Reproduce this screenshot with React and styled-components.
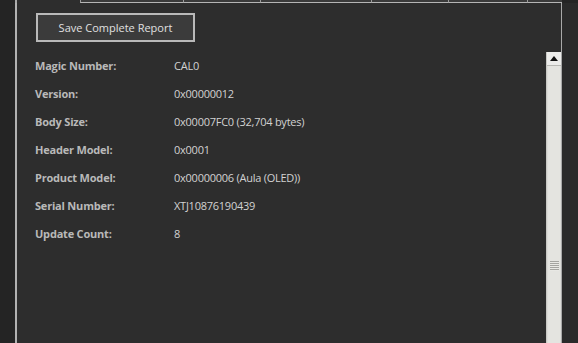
import React from 'react';
import styled, { createGlobalStyle } from 'styled-components';

const Global = createGlobalStyle`
    html, body {
        margin: 0;
        padding: 0;
        background: #242424;
    }
`

const Window = styled.div`
    width: 578px;
    height: 343px;
    display: flex;
    flex-direction: column;
    overflow: hidden;
    background: #242424;
    font-family: "Open Sans", "Noto Sans", "Liberation Sans", sans-serif;
`

const TabStrip = styled.div`
    display: flex;
    height: 3px;
    flex-shrink: 0;
`

const Gutter = styled.div`
    width: ${p => p.w}px;
    flex-shrink: 0;
    background: ${p => p.bg || '#242424'};
`

const Tab = styled.div`
    width: ${p => p.w}px;
    flex-shrink: 0;
    box-sizing: border-box;
    background: ${p => (p.active ? '#2d2d2d' : '#3a3a3a')};
    border-left: ${p => (p.active ? '2px solid #a9a9a9' : '1px solid #9a9a9a')};
    border-bottom: ${p => (p.active ? 'none' : '1px solid #b5b5b5')};
`

const Body = styled.div`
    flex: 1;
    display: flex;
    min-height: 0;
`

const Panel = styled.div`
    width: 547px;
    flex-shrink: 0;
    box-sizing: border-box;
    display: flex;
    background: #2d2d2d;
    border-left: 2px solid #b2b2b2;
    border-right: 1px solid #a8a8a8;
`

const Content = styled.div`
    flex: 1;
    padding: 10px 0 0 19px;
`

const SaveButton = styled.button`
    width: 159px;
    height: 29px;
    box-sizing: border-box;
    background: #3b3b3b;
    border: 2px solid #b9b9b9;
    color: #e0e0e0;
    font-family: inherit;
    font-size: 11px;
    padding: 0;
    cursor: pointer;
`

const Fields = styled.div`
    display: grid;
    grid-template-columns: 139px 1fr;
    grid-auto-rows: 28px;
    margin-top: 9px;
    margin-left: -1px;
    align-items: center;
    font-size: 11px;
`

const Label = styled.div`
    color: #b9b9b9;
    font-weight: 700;
    letter-spacing: -0.2px;
`

const Value = styled.div`
    color: #d2d2d2;
    letter-spacing: -0.25px;
`

const Scrollbar = styled.div`
    width: 14px;
    margin-top: 49px;
    display: flex;
    flex-direction: column;
    background: #dcdcd8;
    border-left: 1px solid #c8c8c4;
`

const ArrowButton = styled.div`
    height: 13px;
    display: flex;
    align-items: center;
    justify-content: center;
    background: #ececea;
    border-bottom: 1px solid #b8b8b4;
`

const Thumb = styled.div`
    flex: 1;
    margin: 0 1px;
    background: #e4e4e0;
    display: flex;
    align-items: center;
    justify-content: center;
    padding-top: 122px;
`

const Grip = styled.div`
    width: 9px;
    height: 10px;
    background: repeating-linear-gradient(
        to bottom,
        #a4a4a0 0 1px,
        #e8e8e4 1px 2px
    );
`

const fields = [
    ['Magic Number:', 'CAL0'],
    ['Version:', '0x00000012'],
    ['Body Size:', '0x00007FC0 (32,704 bytes)'],
    ['Header Model:', '0x0001'],
    ['Product Model:', '0x00000006 (Aula (OLED))'],
    ['Serial Number:', 'XTJ10876190439'],
    ['Update Count:', '8'],
]

export default function App()
{
    return (
        <Window>
            <Global />
            <TabStrip>
                <Gutter w={15} />
                <Tab w={65} active />
                <Tab w={103} />
                <Tab w={77} />
                <Tab w={111} />
                <Tab w={77} />
                <Tab w={79} />
                <Tab w={35} />
                <Gutter w={16} />
            </TabStrip>
            <Body>
                <Gutter w={15} />
                <Panel>
                    <Content>
                        <SaveButton>Save Complete Report</SaveButton>
                        <Fields>
                            {fields.map(([label, value]) => (
                                <React.Fragment key={label}>
                                    <Label>{label}</Label>
                                    <Value>{value}</Value>
                                </React.Fragment>
                            ))}
                        </Fields>
                    </Content>
                    <Scrollbar>
                        <ArrowButton>
                            <svg width="8" height="5" viewBox="0 0 8 5">
                                <path d="M0 5 L4 0 L8 5 Z" fill="#111" />
                            </svg>
                        </ArrowButton>
                        <Thumb>
                            <Grip />
                        </Thumb>
                    </Scrollbar>
                </Panel>
                <Gutter w={16} bg="#2a2a2a" />
            </Body>
        </Window>
    )
}
